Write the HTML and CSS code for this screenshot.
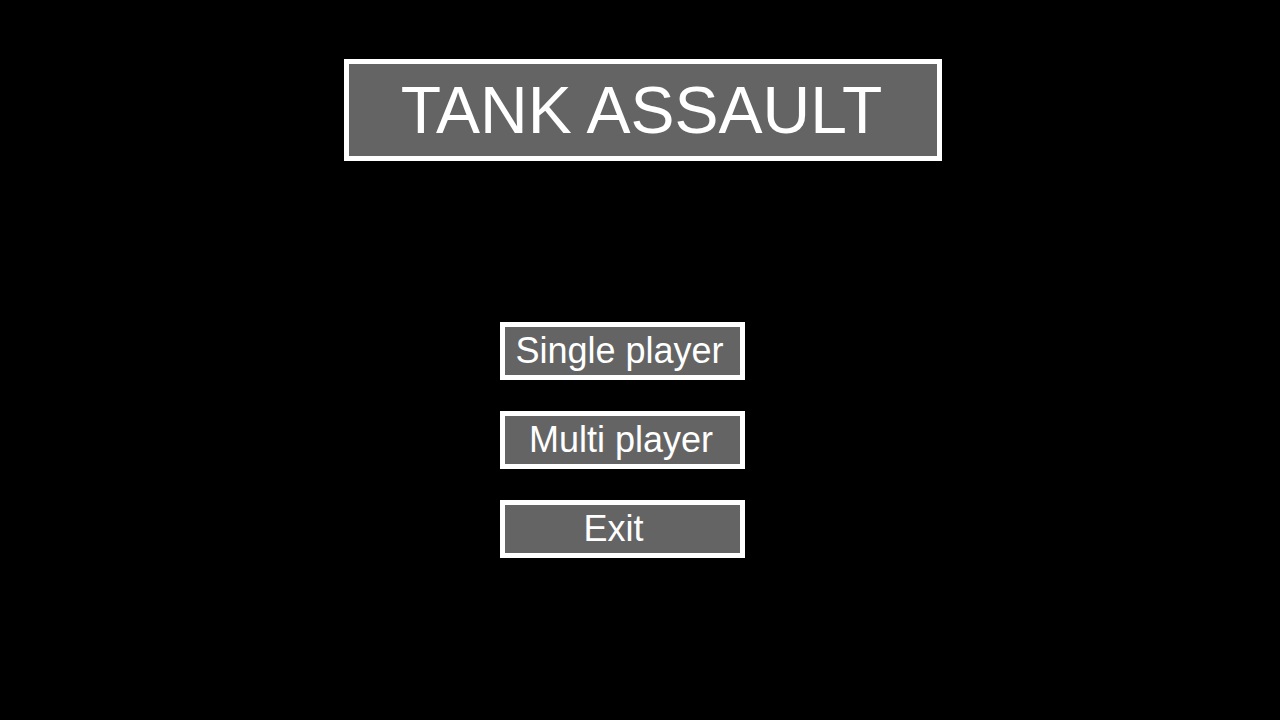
FILE: index.html
```html
<!DOCTYPE html>
<html lang="en">
<head>
    <meta charset="UTF-8">
    <meta name="viewport" content="width=device-width, initial-scale=1.0">
    <title>Tank Assault</title>
    <link rel="stylesheet" href="styles.css">
</head>
<body>
    <div class="screen">
        <h1 class="title">TANK ASSAULT</h1>
        <nav class="menu">
            <button class="menu-btn" type="button">Single player</button>
            <button class="menu-btn multi" type="button">Multi player</button>
            <button class="menu-btn exit" type="button">Exit</button>
        </nav>
    </div>
</body>
</html>
```

FILE: styles.css
```css
html, body {
    margin: 0;
    padding: 0;
    background-color: #000;
}
body {
    width: 1280px;
    height: 720px;
    overflow: hidden;
    font-family: "Liberation Sans", Arial, sans-serif;
}
.screen {
    display: flex;
    flex-direction: column;
    padding-top: 59px;
}
.title {
    box-sizing: border-box;
    width: 598px;
    height: 102px;
    margin: 0 0 0 344px;
    border: 5px solid #fff;
    background-color: #646464;
    color: #fff;
    font-size: 66px;
    font-weight: normal;
    line-height: 92px;
    text-align: center;
    padding-right: 3px;
}
.menu {
    display: flex;
    flex-direction: column;
    gap: 31px;
    margin: 161px 0 0 500px;
}
.menu-btn {
    box-sizing: border-box;
    width: 245px;
    height: 58px;
    padding: 0 6px 0 0;
    border: 5px solid #fff;
    background-color: #646464;
    color: #fff;
    font-family: "Liberation Sans", Arial, sans-serif;
    font-size: 36px;
    line-height: 48px;
    text-align: center;
    cursor: pointer;
}
.menu-btn.multi {
    padding-right: 3px;
}
.menu-btn.exit {
    padding-right: 18px; /* label sits a bit left of centre */
}
```
